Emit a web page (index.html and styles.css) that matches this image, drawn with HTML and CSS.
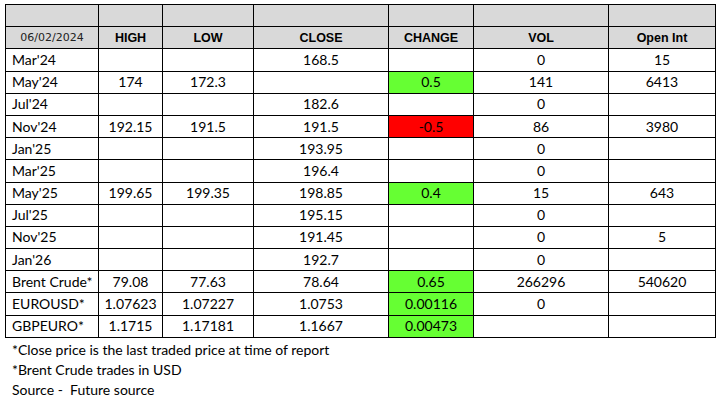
FILE: index.html
```html
<!DOCTYPE html>
<html>
<head>
<meta charset="utf-8">
<link rel="stylesheet" href="styles.css">
</head>
<body>
<table class="grid">
  <colgroup>
    <col class="c1"><col class="c2"><col class="c3"><col class="c4"><col class="c5"><col class="c6"><col class="c7">
  </colgroup>
  <tr class="hd"><td></td><td></td><td></td><td></td><td></td><td></td><td></td></tr>
  <tr class="hd">
    <td class="date">06/02/2024</td><td class="th">HIGH</td><td class="th">LOW</td><td class="th">CLOSE</td><td class="th">CHANGE</td><td class="th">VOL</td><td class="th">Open Int</td>
  </tr>
  <tr><td class="name">Mar'24</td><td></td><td></td><td>168.5</td><td></td><td>0</td><td>15</td></tr>
  <tr><td class="name">May'24</td><td>174</td><td>172.3</td><td></td><td class="up">0.5</td><td>141</td><td>6413</td></tr>
  <tr><td class="name">Jul'24</td><td></td><td></td><td>182.6</td><td></td><td>0</td><td></td></tr>
  <tr><td class="name">Nov'24</td><td>192.15</td><td>191.5</td><td>191.5</td><td class="down">-0.5</td><td>86</td><td>3980</td></tr>
  <tr><td class="name">Jan'25</td><td></td><td></td><td>193.95</td><td></td><td>0</td><td></td></tr>
  <tr><td class="name">Mar'25</td><td></td><td></td><td>196.4</td><td></td><td>0</td><td></td></tr>
  <tr><td class="name">May'25</td><td>199.65</td><td>199.35</td><td>198.85</td><td class="up">0.4</td><td>15</td><td>643</td></tr>
  <tr><td class="name">Jul'25</td><td></td><td></td><td>195.15</td><td></td><td>0</td><td></td></tr>
  <tr><td class="name">Nov'25</td><td></td><td></td><td>191.45</td><td></td><td>0</td><td>5</td></tr>
  <tr><td class="name">Jan'26</td><td></td><td></td><td>192.7</td><td></td><td>0</td><td></td></tr>
  <tr><td class="name">Brent Crude*</td><td>79.08</td><td>77.63</td><td>78.64</td><td class="up">0.65</td><td>266296</td><td>540620</td></tr>
  <tr><td class="name">EUROUSD*</td><td>1.07623</td><td>1.07227</td><td>1.0753</td><td class="up">0.00116</td><td>0</td><td></td></tr>
  <tr><td class="name">GBPEURO*</td><td>1.1715</td><td>1.17181</td><td>1.1667</td><td class="up">0.00473</td><td></td><td></td></tr>
</table>
<div class="notes">
  <p>*Close price is the last traded price at time of report</p>
  <p>*Brent Crude trades in USD</p>
  <p>Source -&nbsp; Future source</p>
</div>
</body>
</html>
```
FILE: styles.css
```css
html, body {
  margin: 0;
  padding: 0;
  background: #ffffff;
}
body {
  font-family: Lato, "Liberation Sans", sans-serif;
  color: #000;
}
.grid {
  border-collapse: collapse;
  margin: 4px 0 0 5px;
  table-layout: fixed;
  width: 710px;
}
.c1 { width: 93px; }
.c2 { width: 64px; }
.c3 { width: 91px; }
.c4 { width: 135px; }
.c5 { width: 85px; }
.c6 { width: 135px; }
.c7 { width: 107px; }
.grid tr {
  height: 22.2px;
}
.grid td {
  border: 1px solid #000;
  padding: 0 4px;
  text-align: center;
  font-size: 14px;
  line-height: 18px;
  white-space: nowrap;
  overflow: hidden;
}
.grid .hd td {
  background: #d9d9d9;
}
.grid td.th {
  font-family: "Liberation Sans", Arial, sans-serif;
  font-weight: bold;
  font-size: 12.5px;
}
.grid td.date {
  font-family: "DejaVu Sans", "Liberation Sans", sans-serif;
  font-size: 11px;
  color: #222;
}
.grid td.name {
  text-align: left;
  padding-left: 6px;
}
.grid td.up {
  background: #66ff33;
}
.grid td.down {
  background: #ff0000;
}
.notes {
  padding: 2px 0 0 12px;
  font-size: 14px;
  line-height: 20px;
}
.notes p {
  margin: 0;
}
```
